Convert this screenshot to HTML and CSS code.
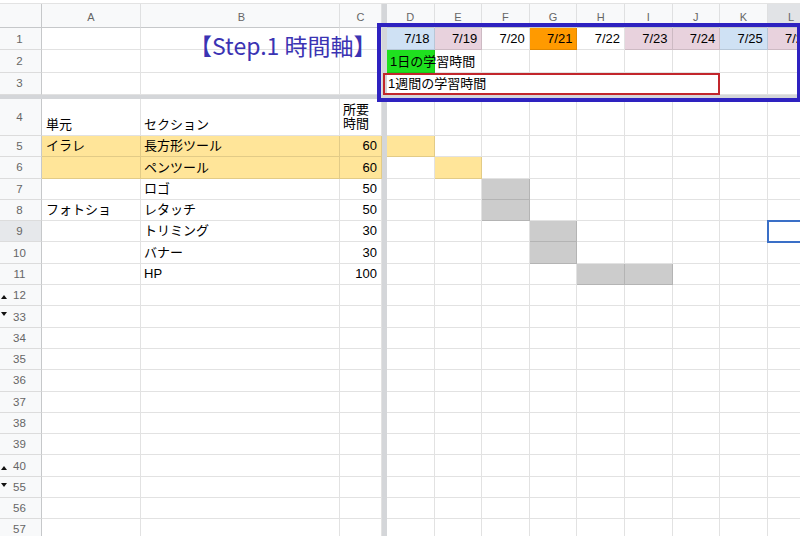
FILE: index.html
```html
<!DOCTYPE html>
<html lang="ja">
<head>
<meta charset="utf-8">
<title>Step.1 時間軸</title>
<link rel="stylesheet" href="styles.css">
</head>
<body>
<div class="sheet">
  <div class="row hdr">
    <div class="rh corner"></div>
    <div class="ch a">A</div><div class="ch b">B</div><div class="ch cc">C</div>
    <div class="fz"></div>
    <div class="ch d">D</div><div class="ch d">E</div><div class="ch d">F</div><div class="ch d">G</div><div class="ch d">H</div><div class="ch d">I</div><div class="ch d">J</div><div class="ch d">K</div><div class="ch d sel">L</div>
  </div>

  <div class="row r13">
    <div class="rh">1</div>
    <div class="c a"></div><div class="c b"></div><div class="c cc"></div>
    <div class="fz"></div>
    <div class="c d n bl">7/18</div><div class="c d n pk">7/19</div><div class="c d n">7/20</div><div class="c d n or">7/21</div><div class="c d n">7/22</div><div class="c d n pk">7/23</div><div class="c d n pk">7/24</div><div class="c d n bl">7/25</div><div class="c d n pk">7/26</div>
  </div>

  <div class="row r13">
    <div class="rh">2</div>
    <div class="c a"></div><div class="c b"></div><div class="c cc"></div>
    <div class="fz"></div>
    <div class="c d gn">1日の学習時間</div><div class="c d"></div><div class="c d"></div><div class="c d"></div><div class="c d"></div><div class="c d"></div><div class="c d"></div><div class="c d"></div><div class="c d"></div>
  </div>

  <div class="row r13">
    <div class="rh">3</div>
    <div class="c a"></div><div class="c b"></div><div class="c cc"></div>
    <div class="fz"></div>
    <div class="c merged">1週間の学習時間</div><div class="c d"></div><div class="c d"></div>
  </div>

  <div class="hsplit"></div>

  <div class="row r4">
    <div class="rh">4</div>
    <div class="c a">単元</div><div class="c b">セクション</div><div class="c cc wrap">所要時間</div>
    <div class="fz"></div>
    <div class="c d"></div><div class="c d"></div><div class="c d"></div><div class="c d"></div><div class="c d"></div><div class="c d"></div><div class="c d"></div><div class="c d"></div><div class="c d"></div>
  </div>

  <div class="row">
    <div class="rh">5</div>
    <div class="c a yl">イラレ</div><div class="c b yl">長方形ツール</div><div class="c cc n yl">60</div>
    <div class="fz"></div>
    <div class="c d yl"></div><div class="c d"></div><div class="c d"></div><div class="c d"></div><div class="c d"></div><div class="c d"></div><div class="c d"></div><div class="c d"></div><div class="c d"></div>
  </div>

  <div class="row">
    <div class="rh">6</div>
    <div class="c a yl"></div><div class="c b yl">ペンツール</div><div class="c cc n yl">60</div>
    <div class="fz"></div>
    <div class="c d"></div><div class="c d yl"></div><div class="c d"></div><div class="c d"></div><div class="c d"></div><div class="c d"></div><div class="c d"></div><div class="c d"></div><div class="c d"></div>
  </div>

  <div class="row">
    <div class="rh">7</div>
    <div class="c a"></div><div class="c b">ロゴ</div><div class="c cc n">50</div>
    <div class="fz"></div>
    <div class="c d"></div><div class="c d"></div><div class="c d gy"></div><div class="c d"></div><div class="c d"></div><div class="c d"></div><div class="c d"></div><div class="c d"></div><div class="c d"></div>
  </div>

  <div class="row">
    <div class="rh">8</div>
    <div class="c a">フォトショ</div><div class="c b">レタッチ</div><div class="c cc n">50</div>
    <div class="fz"></div>
    <div class="c d"></div><div class="c d"></div><div class="c d gy"></div><div class="c d"></div><div class="c d"></div><div class="c d"></div><div class="c d"></div><div class="c d"></div><div class="c d"></div>
  </div>

  <div class="row">
    <div class="rh rsel">9</div>
    <div class="c a"></div><div class="c b">トリミング</div><div class="c cc n">30</div>
    <div class="fz"></div>
    <div class="c d"></div><div class="c d"></div><div class="c d"></div><div class="c d gy"></div><div class="c d"></div><div class="c d"></div><div class="c d"></div><div class="c d"></div><div class="c d cur"></div>
  </div>

  <div class="row">
    <div class="rh">10</div>
    <div class="c a"></div><div class="c b">バナー</div><div class="c cc n">30</div>
    <div class="fz"></div>
    <div class="c d"></div><div class="c d"></div><div class="c d"></div><div class="c d gy"></div><div class="c d"></div><div class="c d"></div><div class="c d"></div><div class="c d"></div><div class="c d"></div>
  </div>

  <div class="row">
    <div class="rh">11</div>
    <div class="c a"></div><div class="c b">HP</div><div class="c cc n">100</div>
    <div class="fz"></div>
    <div class="c d"></div><div class="c d"></div><div class="c d"></div><div class="c d"></div><div class="c d gy"></div><div class="c d gy"></div><div class="c d"></div><div class="c d"></div><div class="c d"></div>
  </div>

  <div class="row">
    <div class="rh"><span class="tri up"></span>12</div>
    <div class="c a"></div><div class="c b"></div><div class="c cc"></div>
    <div class="fz"></div>
    <div class="c d"></div><div class="c d"></div><div class="c d"></div><div class="c d"></div><div class="c d"></div><div class="c d"></div><div class="c d"></div><div class="c d"></div><div class="c d"></div>
  </div>

  <div class="row">
    <div class="rh"><span class="tri dn"></span>33</div>
    <div class="c a"></div><div class="c b"></div><div class="c cc"></div>
    <div class="fz"></div>
    <div class="c d"></div><div class="c d"></div><div class="c d"></div><div class="c d"></div><div class="c d"></div><div class="c d"></div><div class="c d"></div><div class="c d"></div><div class="c d"></div>
  </div>

  <div class="row">
    <div class="rh">34</div>
    <div class="c a"></div><div class="c b"></div><div class="c cc"></div>
    <div class="fz"></div>
    <div class="c d"></div><div class="c d"></div><div class="c d"></div><div class="c d"></div><div class="c d"></div><div class="c d"></div><div class="c d"></div><div class="c d"></div><div class="c d"></div>
  </div>

  <div class="row">
    <div class="rh">35</div>
    <div class="c a"></div><div class="c b"></div><div class="c cc"></div>
    <div class="fz"></div>
    <div class="c d"></div><div class="c d"></div><div class="c d"></div><div class="c d"></div><div class="c d"></div><div class="c d"></div><div class="c d"></div><div class="c d"></div><div class="c d"></div>
  </div>

  <div class="row">
    <div class="rh">36</div>
    <div class="c a"></div><div class="c b"></div><div class="c cc"></div>
    <div class="fz"></div>
    <div class="c d"></div><div class="c d"></div><div class="c d"></div><div class="c d"></div><div class="c d"></div><div class="c d"></div><div class="c d"></div><div class="c d"></div><div class="c d"></div>
  </div>

  <div class="row">
    <div class="rh">37</div>
    <div class="c a"></div><div class="c b"></div><div class="c cc"></div>
    <div class="fz"></div>
    <div class="c d"></div><div class="c d"></div><div class="c d"></div><div class="c d"></div><div class="c d"></div><div class="c d"></div><div class="c d"></div><div class="c d"></div><div class="c d"></div>
  </div>

  <div class="row">
    <div class="rh">38</div>
    <div class="c a"></div><div class="c b"></div><div class="c cc"></div>
    <div class="fz"></div>
    <div class="c d"></div><div class="c d"></div><div class="c d"></div><div class="c d"></div><div class="c d"></div><div class="c d"></div><div class="c d"></div><div class="c d"></div><div class="c d"></div>
  </div>

  <div class="row">
    <div class="rh">39</div>
    <div class="c a"></div><div class="c b"></div><div class="c cc"></div>
    <div class="fz"></div>
    <div class="c d"></div><div class="c d"></div><div class="c d"></div><div class="c d"></div><div class="c d"></div><div class="c d"></div><div class="c d"></div><div class="c d"></div><div class="c d"></div>
  </div>

  <div class="row">
    <div class="rh"><span class="tri up"></span>40</div>
    <div class="c a"></div><div class="c b"></div><div class="c cc"></div>
    <div class="fz"></div>
    <div class="c d"></div><div class="c d"></div><div class="c d"></div><div class="c d"></div><div class="c d"></div><div class="c d"></div><div class="c d"></div><div class="c d"></div><div class="c d"></div>
  </div>

  <div class="row">
    <div class="rh"><span class="tri dn"></span>55</div>
    <div class="c a"></div><div class="c b"></div><div class="c cc"></div>
    <div class="fz"></div>
    <div class="c d"></div><div class="c d"></div><div class="c d"></div><div class="c d"></div><div class="c d"></div><div class="c d"></div><div class="c d"></div><div class="c d"></div><div class="c d"></div>
  </div>

  <div class="row">
    <div class="rh">56</div>
    <div class="c a"></div><div class="c b"></div><div class="c cc"></div>
    <div class="fz"></div>
    <div class="c d"></div><div class="c d"></div><div class="c d"></div><div class="c d"></div><div class="c d"></div><div class="c d"></div><div class="c d"></div><div class="c d"></div><div class="c d"></div>
  </div>

  <div class="row">
    <div class="rh">57</div>
    <div class="c a"></div><div class="c b"></div><div class="c cc"></div>
    <div class="fz"></div>
    <div class="c d"></div><div class="c d"></div><div class="c d"></div><div class="c d"></div><div class="c d"></div><div class="c d"></div><div class="c d"></div><div class="c d"></div><div class="c d"></div>
  </div>

  <div class="title">【Step.1 時間軸】</div>
  <div class="selbox"></div>
</div>
</body>
</html>
```

FILE: styles.css
```css
* { box-sizing: border-box; margin: 0; padding: 0; }
html, body { width: 800px; height: 536px; overflow: hidden; background: #fff; }
body {
  font-family: "Liberation Sans", "Noto Sans CJK JP", sans-serif;
  font-size: 13px;
  color: #000;
}
.sheet {
  position: relative;
  width: 816px;
  display: flex;
  flex-direction: column;
}
.row { display: flex; height: 21.3px; flex-shrink: 0; }
.hdr { height: 25px; margin-top: 3px; border-top: 1px solid #e3e3e3; }
.r13 { height: 22.33px; }
.r4 { height: 37px; }
.hsplit { height: 4px; flex-shrink: 0; background: #d4d6d9; }

.rh {
  position: relative;
  width: 42px;
  flex-shrink: 0;
  background: #f8f9fa;
  border-right: 1px solid #c6c8ca;
  border-bottom: 1px solid #dcdcdc;
  color: #666;
  font-size: 11.5px;
  display: flex;
  align-items: center;
  justify-content: center;
  padding-right: 2px;
}
.rsel { background: #e6e8eb; }
.corner { border-bottom: 1px solid #c6c8ca; }

.ch {
  flex-shrink: 0;
  background: #f8f9fa;
  border-right: 1px solid #dfe0e1;
  border-bottom: 1px solid #c6c8ca;
  color: #666;
  font-size: 11px;
  display: flex;
  align-items: center;
  justify-content: center;
  padding-top: 3px;
}
.ch.sel { background: #e1e3e6; }

.c {
  flex-shrink: 0;
  border-right: 1px solid rgba(0, 0, 0, 0.115);
  border-bottom: 1px solid rgba(0, 0, 0, 0.115);
  display: flex;
  align-items: flex-end;
  padding: 0 3px 2px 4px;
  line-height: 16px;
  white-space: nowrap;
}
.a { width: 99px; }
.b { width: 199px; padding-left: 3px; }
.cc { width: 42px; }
.d { width: 47.6px; }
.n { justify-content: flex-end; padding-right: 4px; }
.wrap {
  white-space: normal;
  line-height: 14px;
  padding-bottom: 4px;
  padding-left: 3px;
}
.fz { width: 5px; flex-shrink: 0; background: #d4d6d9; }

.bl { background: #cfe1f4; }
.pk { background: #e8d2dd; }
.or { background: #ff9a00; }
.gn { background: #1fe01f; padding-left: 3px; }
.yl { background: #ffe599; }
.gy { background: #cccccc; }

.merged {
  width: 337.2px;
  margin-left: -4px;
  border: 2px solid #c2262c;
  padding: 0 3px 1px 3px;
  position: relative;
}
.cur {
  position: relative;
  outline: 2px solid #3a6fc7;
  outline-offset: -1px;
}

.tri {
  position: absolute;
  left: 1px;
  width: 0;
  height: 0;
  border-left: 3px solid transparent;
  border-right: 3px solid transparent;
}
.tri.up { bottom: 6px; border-bottom: 4px solid #111; }
.tri.dn { top: 6px; border-top: 4px solid #111; }

.title {
  position: absolute;
  left: 189px;
  top: 33px;
  font-family: "Noto Sans CJK JP", sans-serif;
  font-size: 23px;
  line-height: 25px;
  color: #3b33b3;
  white-space: nowrap;
}
.selbox {
  position: absolute;
  left: 377px;
  top: 23px;
  width: 424px;
  height: 79px;
  border: 4px solid #2e22c0;
}
```
